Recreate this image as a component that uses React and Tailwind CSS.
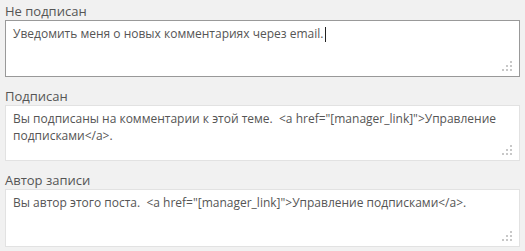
import React from "react";

function Grip() {
  return (
    <svg className="absolute right-[6px] bottom-[4px]" width="12" height="12" viewBox="0 0 12 12">
      <g fill="#c8c8c8">
        <rect x="9" y="1" width="2" height="2" />
        <rect x="5" y="5" width="2" height="2" />
        <rect x="9" y="5" width="2" height="2" />
        <rect x="1" y="9" width="2" height="2" />
        <rect x="5" y="9" width="2" height="2" />
        <rect x="9" y="9" width="2" height="2" />
      </g>
    </svg>
  );
}

function Field({ label, children, focused, h }) {
  return (
    <div className="flex flex-col mb-[10px]">
      <div className="text-[13px] leading-[18px] text-[#555]">{label}</div>
      <div
        className={`relative bg-white border ${focused ? "border-[#999]" : "border-[#e2e2e2]"} ${h} px-[7px] pt-[4px] text-[12px] leading-[17px] text-[#555]`}
      >
        {children}
        <Grip />
      </div>
    </div>
  );
}

export default function App() {
  return (
    <div
      className="w-[525px] h-[251px] bg-[#f1f1f1] px-[5px] pt-[2px] overflow-hidden"
      style={{ fontFamily: '"Open Sans", sans-serif' }}
    >
      <Field label="Не подписан" focused h="h-[57px]">
        Уведомить меня о новых комментариях через email.
        <span className="inline-block w-px h-[15px] bg-[#222] align-middle ml-[2px]" />
      </Field>
      <Field label="Подписан" h="h-[56px]">
        Вы подписаны на комментарии к этой теме.&nbsp; &lt;a href="[manager_link]"&gt;Управление подписками&lt;/a&gt;.
      </Field>
      <Field label="Автор записи" h="h-[58px]">
        Вы автор этого поста.&nbsp; &lt;a href="[manager_link]"&gt;Управление подписками&lt;/a&gt;.
      </Field>
    </div>
  );
}
